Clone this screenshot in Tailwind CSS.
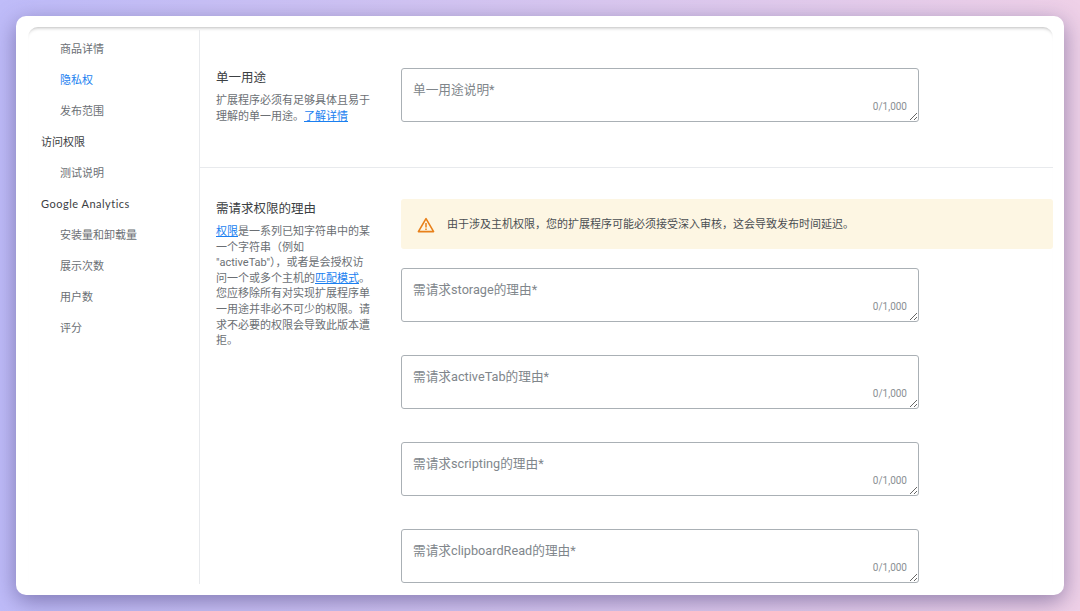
<!DOCTYPE html>
<html lang="zh-CN">

<head>
  <meta charset="UTF-8">
  <meta name="viewport" content="width=device-width, initial-scale=1.0">
  <title>隐私权</title>
  <script src="https://cdn.jsdelivr.net/npm/@tailwindcss/browser@4"></script>
</head>

<body class="w-[1080px] h-[611px] overflow-hidden bg-linear-to-r from-[#bfbcf9] to-[#efd1e8] p-4 font-['Roboto','Noto_Sans_CJK_SC',sans-serif]">
  <div class="w-[1048px] h-[579px] rounded-[10px] bg-white pt-[11px] pl-3 pr-[11px] shadow-[0_6px_22px_rgba(60,50,110,0.5)]">
    <div class="flex h-[557px] rounded-t-[10px] shadow-[inset_0_4px_4px_-4px_rgba(0,0,0,0.4)]">

      <!-- Sidebar -->
      <nav class="w-[172px] shrink-0 border-r border-[#e8eaed] pt-[5px] mt-[3px] text-[11px] text-[#6b6f74]">
        <a class="flex h-[31px] items-center pl-8">商品详情</a>
        <a class="flex h-[31px] items-center pl-8 text-[#1a7ff0]">隐私权</a>
        <a class="flex h-[31px] items-center pl-8">发布范围</a>
        <a class="flex h-[31px] items-center pl-[13px] text-[#3c4043]">访问权限</a>
        <a class="flex h-[31px] items-center pl-8">测试说明</a>
        <a class="flex h-[31px] items-center pb-[2px] pl-[13px] text-[#3c4043] font-['Lato','Noto_Sans_CJK_SC',sans-serif] tracking-[0.5px]">Google Analytics</a>
        <a class="flex h-[31px] items-center pl-8">安装量和卸载量</a>
        <a class="flex h-[31px] items-center pl-8">展示次数</a>
        <a class="flex h-[31px] items-center pl-8">用户数</a>
        <a class="flex h-[31px] items-center pl-8">评分</a>
      </nav>

      <!-- Main -->
      <main class="flex-1 overflow-hidden">
        <section class="flex h-[141px] border-b border-[#e8eaed] pl-4 pt-[41px]">
          <div class="w-[185px] shrink-0 pt-px pr-[30px]">
            <h2 class="text-[12.5px] leading-[18px] font-normal text-[#3c4043]">单一用途</h2>
            <p class="mt-[6px] text-[11px] leading-4 text-[#6b6f74]">扩展程序必须有足够具体且易于理解的单一用途。<a class="text-[#1a7ff0] underline">了解详情</a></p>
          </div>
          <div class="relative h-[54px] w-[518px]">
            <textarea placeholder="单一用途说明*" class="h-[54px] w-[518px] rounded-[3px] border border-[#aab0b5] pl-[11px] pr-3 py-[11px] text-[12.7px] leading-[20px] placeholder:text-[#80868b]"></textarea>
            <span class="absolute right-3 bottom-[9px] text-[10px] leading-3 text-[#8a8f94]">0/1,000</span>
          </div>
        </section>

        <section class="flex pl-4 pt-[31px]">
          <div class="w-[185px] shrink-0 pt-px pr-[30px]">
            <h2 class="text-[12.5px] leading-[18px] font-normal text-[#3c4043]">需请求权限的理由</h2>
            <p class="mt-[6px] text-[11px] leading-[15.6px] text-[#6b6f74]"><a class="text-[#1a7ff0] underline">权限</a>是一系列已知字符串中的某一个字符串（例如 "activeTab"），或者是会授权访问一个或多个主机的<a class="text-[#1a7ff0] underline">匹配模式</a>。您应移除所有对实现扩展程序单一用途并非必不可少的权限。请求不必要的权限会导致此版本遭拒。</p>
          </div>
          <div class="flex-1">
            <div class="flex h-[50px] items-center gap-3 rounded-[3px] bg-[#fdf6e3] pl-4 pt-[2px] text-[11px] text-[#4a4e52]">
              <svg width="18" height="16" viewBox="0 0 18 16" fill="none">
                <path d="M9 1.6 1.4 14.6h15.2L9 1.6Z" stroke="#e8801a" stroke-width="1.6" stroke-linejoin="round" />
                <path d="M9 6v4.4M9 11.4v1.5" stroke="#e8801a" stroke-width="1.5" />
              </svg>
              <span>由于涉及主机权限，您的扩展程序可能必须接受深入审核，这会导致发布时间延迟。</span>
            </div>
            <div class="mt-[19px] flex flex-col gap-[33px]">
              <div class="relative h-[54px] w-[518px]">
                <textarea placeholder="需请求storage的理由*" class="h-[54px] w-[518px] rounded-[3px] border border-[#aab0b5] pl-[11px] pr-3 py-[11px] text-[12.7px] leading-[20px] placeholder:text-[#80868b]"></textarea>
                <span class="absolute right-3 bottom-[9px] text-[10px] leading-3 text-[#8a8f94]">0/1,000</span>
              </div>
              <div class="relative h-[54px] w-[518px]">
                <textarea placeholder="需请求activeTab的理由*" class="h-[54px] w-[518px] rounded-[3px] border border-[#aab0b5] pl-[11px] pr-3 py-[11px] text-[12.7px] leading-[20px] placeholder:text-[#80868b]"></textarea>
                <span class="absolute right-3 bottom-[9px] text-[10px] leading-3 text-[#8a8f94]">0/1,000</span>
              </div>
              <div class="relative h-[54px] w-[518px]">
                <textarea placeholder="需请求scripting的理由*" class="h-[54px] w-[518px] rounded-[3px] border border-[#aab0b5] pl-[11px] pr-3 py-[11px] text-[12.7px] leading-[20px] placeholder:text-[#80868b]"></textarea>
                <span class="absolute right-3 bottom-[9px] text-[10px] leading-3 text-[#8a8f94]">0/1,000</span>
              </div>
              <div class="relative h-[54px] w-[518px]">
                <textarea placeholder="需请求clipboardRead的理由*" class="h-[54px] w-[518px] rounded-[3px] border border-[#aab0b5] pl-[11px] pr-3 py-[11px] text-[12.7px] leading-[20px] placeholder:text-[#80868b]"></textarea>
                <span class="absolute right-3 bottom-[9px] text-[10px] leading-3 text-[#8a8f94]">0/1,000</span>
              </div>
            </div>
          </div>
        </section>
      </main>
    </div>
  </div>
</body>

</html>
